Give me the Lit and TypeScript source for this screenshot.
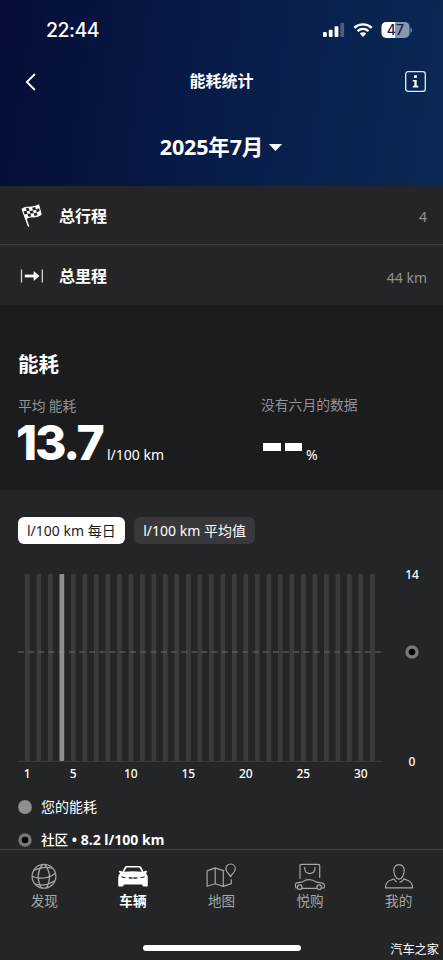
import { LitElement, html, css, svg } from "lit";
import { customElement, state } from "lit/decorators.js";
import { classMap } from "lit/directives/class-map.js";

const flag = svg`<svg width="24" height="26" viewBox="0 0 24 26">
  <path d="M2.4 7.3 L8.4 24" stroke="#fff" stroke-width="1.5" fill="none" stroke-linecap="round"/>
  <path d="M2.2 7.2 C6.2 3.2 9.6 7.4 18.7 2.8 L21.2 12.6 C14 17.4 10 12.5 6 17.4 Z" fill="#fff" stroke="#fff" stroke-width="1"/>
  <g fill="#242526"><path d="M5.8 5.8 l3 .5 .8 2.8 -3-.2z"/><path d="M12.2 5.7 l3.1-.8 .7 2.8 -3 .8z"/><path d="M3.5 9.2 l3.1-.4 .9 3 -3 .8z"/><path d="M9.6 9 l3.4-.6 .7 2.9 -3.3 .5z"/><path d="M16 7.6 l3-1.3 .7 2.8 -3 1.4z"/><path d="M7.5 11.8 l2.9 0 .8 2.6 -3 .2z"/><path d="M13.7 11.3 l3-.8 .8 2.8 -3 .8z"/></g></svg>`;

const distance = svg`<svg width="24" height="16" viewBox="0 0 24 16"><path d="M1.5 1.5V14.5M22.3 1.5V14.5" stroke="#d6d6d7" stroke-width="1.3"/><path d="M4.8 8H16" stroke="#fff" stroke-width="2.8"/><path d="M13.6 3L19.4 8L13.6 13Z" fill="#fff"/></svg>`;

const globe = svg`<svg width="30" height="28" viewBox="0 0 30 28"><g fill="none" stroke="#a5a6a7" stroke-width="1.25"><circle cx="15" cy="14.3" r="11.9"/><path d="M13.5 2.5C8.5 9 7.8 17 12 25.7M15.5 2.5C20.8 8.5 22 17 17.6 25.9M4.6 8.4C11 5.2 18 4.6 24 6.5M3.2 14.2C10 17.6 20 16.6 26.4 11.2M6.2 22C12 24 19.5 23 25.4 18.8"/></g></svg>`;

const car = svg`<svg width="32" height="28" viewBox="0 0 32 28"><path fill="#fff" fill-rule="evenodd" d="M10 4.1H22C23.4 4.1 24.1 4.7 24.8 6.1L26.4 9.6L28.8 8.7C30.2 8.5 30.7 9.7 29.6 10.6L28.8 11.3C30.3 12.6 30.8 14.4 30.8 16.5V23.2C30.8 24.2 30.4 24.6 29.6 24.6H27C26 24.6 25.4 24 25.2 22.6H6.8C6.6 24 6 24.6 5 24.6H2.4C1.6 24.6 1.2 24.2 1.2 23.2V16.5C1.2 14.4 1.7 12.6 3.2 11.3L2.4 10.6C1.3 9.7 1.8 8.5 3.2 8.7L5.6 9.6L7.2 6.1C7.9 4.7 8.6 4.1 10 4.1ZM9.6 5.5L7.2 9.8C13 8.9 19 8.9 24.8 9.8L22.4 5.5Z"/><path d="M4.2 14.3L9 15.6L8 16.3L4.6 15.5ZM27.8 14.3L23 15.6L24 16.3L27.4 15.5ZM11.2 15.3H15.5V16.8H12.4ZM16.5 15.3H20.8L19.6 16.8H16.5Z" fill="#242526"/></svg>`;

const map = svg`<svg width="32" height="28" viewBox="0 0 32 28"><g fill="none" stroke="#a5a6a7" stroke-width="1.2" stroke-linejoin="round"><path d="M19.4 8.2L18.3 8.6L10.2 5.9L2.1 8.9V24.3L10.2 21.8L18.3 24.4L26.3 21.6V17.3M10.2 5.9V21.8M18.3 8.6V24.4M25.6 14.8C24.6 11.9 20.9 10.3 20.9 6.7A4.7 4.7 0 0 1 30.3 6.7C30.3 10.3 26.6 11.9 25.6 14.8Z"/></g></svg>`;

const shop = svg`<svg width="32" height="28" viewBox="0 0 32 28"><g fill="none" stroke="#a5a6a7" stroke-width="1.2" stroke-linejoin="round" stroke-linecap="round"><path d="M6 16.6V3.4C6 2.8 6.4 2.4 7 2.4H24.7C25.3 2.4 25.7 2.8 25.7 3.4V15.4M10.7 5.3V6.6C10.7 13.2 21 13.2 21 6.6V5.3"/><path d="M3.5 26H2.1C.9 24 1.2 21.2 2.8 20.8L7.6 20.2L11.4 18.2C15.2 17.2 19 17.6 22.4 20.2L28.3 21.1C30.5 21.8 31.2 23.5 30 26H27.7M8.1 26.3H22.9"/><circle cx="5.7" cy="25.2" r="2.3"/><circle cx="25.2" cy="25.2" r="2.3"/></g></svg>`;

const person = svg`<svg width="32" height="28" viewBox="0 0 32 28"><g fill="none" stroke="#a5a6a7" stroke-width="1.2" stroke-linejoin="round"><path d="M16 2.7C19.5 2.7 21.4 5.3 21.2 8.8C21 13.2 18.7 17.1 16 17.1S11 13.2 10.8 8.8C10.6 5.3 12.5 2.7 16 2.7Z"/><path d="M11.2 16.9L7.5 18.3C4.6 19.3 2.5 21.8 2.5 25.8H29.5C29.5 21.8 27.4 19.3 24.5 18.3L20.8 16.9C20.2 18.8 18.6 19.9 16.5 20.1M11.2 16.9C11.6 18.4 12.4 19.4 13.8 19.9"/></g></svg>`;

const tabs = [
  { label: "发现", icon: globe },
  { label: "车辆", icon: car },
  { label: "地图", icon: map },
  { label: "悦购", icon: shop },
  { label: "我的", icon: person },
];

const days = Array.from({ length: 31 }, (_, i) => i + 1);
const pitch = 11.5;

@customElement("app-root")
export class AppRoot extends LitElement {
  @state() private activeTab = 1;
  @state() private usedDay = 4;

  static styles = css`
    :host { display: flex; flex-direction: column; width: 443px; height: 960px; overflow: hidden; position: relative; background: #242526; color: #fff; font-family: "Noto Sans", "Noto Sans CJK SC", sans-serif; }
    * { box-sizing: border-box; }
    svg { display: block; flex: none; }
    .header { height: 186px; flex: none; background: linear-gradient(98deg, #050d38 0%, #071641 30%, #091e4c 60%, #0a2954 100%); }
    .status { height: 60px; padding: 0 30px 0 46px; display: flex; align-items: center; justify-content: space-between; }
    .clock { font: 500 19.5px/24px Inter, sans-serif; letter-spacing: -0.5px; }
    .signals { display: flex; align-items: center; gap: 8px; }
    .nav { height: 43px; display: grid; grid-template-columns: 60px 1fr 60px; align-items: center; padding: 0 16px 0 24px; }
    .title { font: 700 16px/24px "Noto Sans CJK SC", sans-serif; text-align: center; padding: 0 8px 3px 0; }
    .info { justify-self: end; }
    .month { height: 88px; display: flex; justify-content: center; align-items: center; gap: 5px; font: 700 21.5px/30px "Noto Sans", "Noto Sans CJK SC", sans-serif; letter-spacing: -0.15px; }
    .row { height: 59px; flex: none; display: flex; align-items: center; padding: 0 16px 0 20px; }
    .row.first { border-bottom: 1px solid #414244; margin-bottom: 1px; }
    .glyph { width: 39px; }
    .name { flex: 1; font: 700 16px/24px "Noto Sans CJK SC", sans-serif; padding-bottom: 1px; }
    .value { font-size: 14px; line-height: 20px; color: #929395; padding-top: 4px; letter-spacing: 0; }
    .summary { height: 185px; flex: none; background: #1b1c1e; padding: 43px 18px 0; display: grid; grid-template-columns: 243px 1fr; grid-template-rows: 30px 1fr; }
    .heading { grid-column: 1 / 3; font: 700 20.5px/30px "Noto Sans CJK SC", sans-serif; }
    .caption { font: 400 13.8px/20px "Noto Sans CJK SC", sans-serif; color: #929395; padding-top: 17px; height: 41px; }
    .caption.right { padding-top: 16px; }
    .figure { display: flex; align-items: baseline; line-height: 44px; }
    .figure::before { content: ""; width: 0; height: 41px; }
    .big { font-family: Inter, sans-serif; font-size: 48px; font-weight: 800; letter-spacing: -2.2px; width: 89px; margin-left: -2px; white-space: nowrap; }
    .unit { font-size: 14px; margin-left: 2px; letter-spacing: 0; }
    .dashes { display: flex; gap: 4px; margin: 0 2px; }
    .dash { width: 17.5px; height: 8px; background: #fff; transform: translateY(-9px); }
    .chart { flex: 1; padding: 27px 0 0 18px; min-height: 0; }
    .chips { display: flex; gap: 9px; height: 27px; }
    .chip { height: 27px; padding: 0 9.5px; border-radius: 6px; font-size: 14px; line-height: 27px; background: #39393c; white-space: nowrap; }
    .chip.on { padding: 0 9px; background: #fff; color: #1c1c1e; }
    .plot { display: grid; grid-template-columns: 364px 1fr; height: 192px; margin-top: 26px; }
    .scale { display: grid; grid-template-rows: 14px 1fr 14px; justify-items: center; font-size: 12px; font-weight: 500; line-height: 14px; margin-top: -2px; height: 201px; padding-right: 1px; }
    .scale svg { margin-top: 63px; }
    .ticks { display: flex; height: 18px; margin-top: 4px; padding-left: 3.5px; font-size: 12px; font-weight: 500; line-height: 16px; }
    .tick { width: 11.5px; display: flex; justify-content: center; white-space: nowrap; flex: none; }
    .legend { display: flex; flex-direction: column; gap: 9px; margin-top: 11px; }
    .item { display: flex; align-items: center; gap: 9px; height: 24px; font: 400 14px/24px "Noto Sans", "Noto Sans CJK SC", sans-serif; }
    .item b { font-weight: 700; }
    .item em { font-style: normal; font-weight: 500; font-size: 13.6px; }
    .tabbar { height: 111px; flex: none; border-top: 1px solid #414244; background: #242526; display: grid; grid-template-columns: repeat(5, 88.6px); padding-top: 12px; position: relative; z-index: 1; }
    .tab { display: flex; flex-direction: column; align-items: center; color: #a5a6a7; font: 400 13.6px/20px "Noto Sans CJK SC", sans-serif; }
    .tab.on { color: #fff; font-weight: 700; }
    .home { position: absolute; left: 143px; top: 95px; width: 158px; height: 6px; border-radius: 3px; background: #fff; }
    .mark { position: absolute; right: 4px; bottom: 2px; font: 400 12.2px/18px "Noto Sans CJK SC", sans-serif; color: #fff; }
  `;

  private signals() {
    return html`<div class="signals">
      <svg width="23" height="16" viewBox="0 0 23 16"><g fill="#fff"><rect x="1" y="10" width="3.8" height="5" rx="1"/><rect x="6.8" y="7.8" width="3.8" height="7.2" rx="1"/><rect x="12.6" y="4.2" width="3.8" height="10.8" rx="1"/><rect x="18.3" y="1" width="3.8" height="14" rx="1" opacity=".28"/></g></svg>
      <svg width="20" height="16" viewBox="0 0 20 16"><g fill="none" stroke="#fff" stroke-width="2.4"><path d="M1.3 5.8C6.2 1.2 13.8 1.2 18.7 5.8"/><path d="M4.5 9.2C7.8 6.3 12.2 6.3 15.5 9.2"/></g><path d="M6.7 11.5C8.8 9.9 11.2 9.9 13.3 11.5L10 15Z" fill="#fff"/></svg>
      <svg width="32" height="18" viewBox="0 0 32 18"><path d="M5.5 1H14V17H5.5C2.5 17 .5 15 .5 12.3V5.7C.5 3 2.5 1 5.5 1Z" fill="#fff"/><path d="M14 1H23.5C26.5 1 28.5 3 28.5 5.7V12.3C28.5 15 26.5 17 23.5 17H14Z" fill="#8997b0"/><path d="M29.5 6.4C31.4 6.8 31.4 11.2 29.5 11.6Z" fill="#8997b0"/><text x="14.4" y="14" text-anchor="middle" font-family="Inter, sans-serif" font-weight="500" font-size="14" fill="#10204a">47</text></svg>
    </div>`;
  }

  private ring() {
    return html`<svg width="14" height="14" viewBox="0 0 14 14"><circle cx="7" cy="7" r="5" fill="#000" stroke="#77787a" stroke-width="3.4"/></svg>`;
  }

  private bars() {
    return html`<svg width="364" height="192" viewBox="0 0 364 192">
      ${days.map((d) => d === this.usedDay ? null : svg`<rect x=${7 + (d - 1) * pitch} y="4" width="4.7" height="187" rx="1" fill="#3a3b3d"/>`)}
      <path d="M0 82H364" stroke="#6b6c6e" stroke-width="1.2" stroke-dasharray="5.8 4.4"/>
      <path d="M0 191.3H364" stroke="#3d3e40" stroke-width="1"/>
      <rect x=${7 + (this.usedDay - 1) * pitch} y="4" width="4.7" height="187" rx="1" fill="#8e8f91"/>
    </svg>`;
  }

  render() {
    return html`
      <div class="header">
        <div class="status"><span class="clock">22:44</span>${this.signals()}</div>
        <div class="nav">
          <svg width="14" height="20" viewBox="0 0 14 20"><path d="M10.9 2L2.9 10L10.9 18" fill="none" stroke="#fff" stroke-width="1.9"/></svg>
          <span class="title">能耗统计</span>
          <svg class="info" width="23" height="23" viewBox="0 0 23 23"><rect x="1.7" y="1.7" width="19.6" height="19.6" rx="2.4" fill="none" stroke="#e8ecf5" stroke-width="1.3"/><rect x="10" y="5.3" width="3" height="2.6" fill="#fff"/><path d="M8.8 10H12.7V15.8H14.3V17.4H8.8V15.8H10.4V11.6H8.8Z" fill="#fff"/></svg>
        </div>
        <div class="month"><span>2025年7月</span><svg width="15" height="9" viewBox="0 0 15 9"><path d="M.8 1H14.2L7.5 8Z" fill="#fff"/></svg></div>
      </div>
      <div class="row first"><span class="glyph">${flag}</span><span class="name">总行程</span><span class="value">4</span></div>
      <div class="row"><span class="glyph">${distance}</span><span class="name">总里程</span><span class="value">44 km</span></div>
      <div class="summary">
        <div class="heading">能耗</div>
        <div><div class="caption">平均 能耗</div><div class="figure"><span class="big">13.7</span><span class="unit">l/100 km</span></div></div>
        <div><div class="caption right">没有六月的数据</div><div class="figure"><span class="dashes"><i class="dash"></i><i class="dash"></i></span><span class="unit">%</span></div></div>
      </div>
      <div class="chart">
        <div class="chips"><span class="chip on">l/100 km 每日</span><span class="chip">l/100 km 平均值</span></div>
        <div class="plot">${this.bars()}<div class="scale"><span>14</span>${this.ring()}<span>0</span></div></div>
        <div class="ticks">${days.map((d) => html`<span class="tick">${d === 1 || d % 5 === 0 ? d : ""}</span>`)}</div>
        <div class="legend">
          <div class="item"><svg width="14" height="14" viewBox="0 0 14 14"><circle cx="7" cy="7" r="6.9" fill="#8e8f91"/></svg><span>您的能耗</span></div>
          <div class="item">${this.ring()}<b><em>社区</em> • 8.2 l/100 km</b></div>
        </div>
      </div>
      <div class="tabbar">
        ${tabs.map((t, i) => html`<div class=${classMap({ tab: true, on: i === this.activeTab })} @click=${() => (this.activeTab = i)}>${t.icon}<span>${t.label}</span></div>`)}
        <i class="home"></i><span class="mark">汽车之家</span>
      </div>`;
  }
}
